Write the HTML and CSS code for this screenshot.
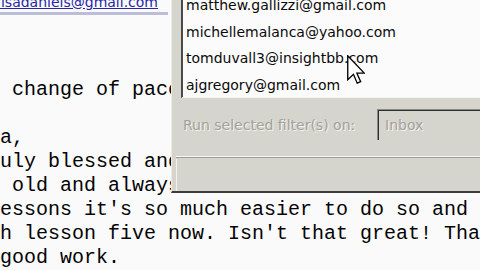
FILE: index.html
```html
<!DOCTYPE html>
<html>
<head>
<meta charset="utf-8">
<link rel="stylesheet" href="styles.css">
</head>
<body>
<div class="screen">
  <div class="mail">
    <div class="hdr">
      <div class="addr"><span class="link">lisadaniels@gmail.com</span></div>
    </div>
    <pre class="msg"> change of pace

a,
uly blessed and
 old and always
essons it's so much easier to do so and
h lesson five now. Isn't that great! Tha
good work.</pre>
  </div>

  <div class="dialog">
    <div class="inner">
      <ul class="listbox">
        <li>matthew.gallizzi@gmail.com</li>
        <li>michellemalanca@yahoo.com</li>
        <li>tomduvall3@insightbb.com</li>
        <li>ajgregory@gmail.com</li>
      </ul>
      <div class="runrow">
        <span class="dis">Run selected filter(s) on:</span>
        <div class="combo"><span class="dis">Inbox</span></div>
      </div>
    </div>
    <div class="sep"></div>
    <div class="status"></div>
  </div>

  <svg class="cursor" width="18" height="30" viewBox="0 0 12 20">
    <path d="M0.5 0.5 L0.5 16.5 L4.3 12.9 L6.8 18.8 L9.1 17.8 L6.6 12.1 L11.5 12.1 Z" fill="#fff" stroke="#000" stroke-width="0.9" stroke-linejoin="miter"/>
  </svg>
</div>
</body>
</html>
```

FILE: styles.css
```css
html, body {
  margin: 0;
  padding: 0;
}
body {
  width: 480px;
  height: 270px;
  overflow: hidden;
  background: #fafafa;
}
.screen {
  position: relative;
  width: 480px;
  height: 270px;
  overflow: hidden;
}
.mail {
  display: flex;
  flex-direction: column;
}
.hdr {
  height: 15px;
}
.addr {
  width: 168px;
  overflow: hidden;
  border-bottom: 3px solid #bcbdd6;
  display: flex;
  justify-content: flex-end;
  padding-right: 10px;
  box-sizing: border-box;
  height: 15px;
}
.link {
  display: block;
  margin-top: -6px;
  font: 14px/16px "DejaVu Sans", Verdana, sans-serif;
  color: #2626a6;
  text-decoration: underline;
  white-space: nowrap;
}
.msg {
  margin: 0;
  padding-top: 63px;
  font: 20px/24px "Liberation Mono", "Courier New", monospace;
  color: #050505;
  white-space: pre;
}

.dialog {
  position: absolute;
  left: 171px;
  top: -12px;
  width: 320px;
  height: 205px;
  background: #d6d5cd;
  border-left: 1px solid #ecebe4;
  border-bottom: 2px solid #3c3c3c;
  box-sizing: border-box;
  display: flex;
  flex-direction: column;
  padding-left: 4px;
}
.inner {
  padding-left: 5px;
}
.listbox {
  list-style: none;
  margin: 0;
  height: 110px;
  box-sizing: border-box;
  background: #fbfbfb;
  border-left: 2px solid #4a4a4a;
  border-bottom: 1px solid #f4f4f0;
  padding: 4px 0 0 3px;
  font: 14px/26px "DejaVu Sans", Verdana, sans-serif;
  color: #0a0a0a;
  overflow: hidden;
}
.listbox li {
  height: 26.5px;
  white-space: nowrap;
}
.runrow {
  display: grid;
  grid-template-columns: 194px 1fr;
  align-items: center;
  margin-top: 11px;
  height: 31px;
  padding-left: 2px;
}
.dis {
  font: 14px/16px "DejaVu Sans", Verdana, sans-serif;
  color: #a3a29b;
  text-shadow: 1px 1px 0 #f2f2ee;
  white-space: nowrap;
}
.combo {
  height: 31px;
  box-sizing: border-box;
  border-top: 1px solid #8a8a84;
  border-left: 1px solid #8a8a84;
  box-shadow: inset 1px 1px 0 #2e2e2e;
  display: flex;
  align-items: center;
  padding-left: 7px;
}
.sep {
  margin-top: 16px;
  height: 2px;
  border-top: 1px solid #f8f8f4;
  border-bottom: 1px solid #9c9b95;
  box-sizing: border-box;
}
.status {
  flex: 1;
  margin-top: 1px;
  border-left: 1px solid #f2f2ec;
}
.cursor {
  position: absolute;
  left: 347px;
  top: 55px;
}
```
